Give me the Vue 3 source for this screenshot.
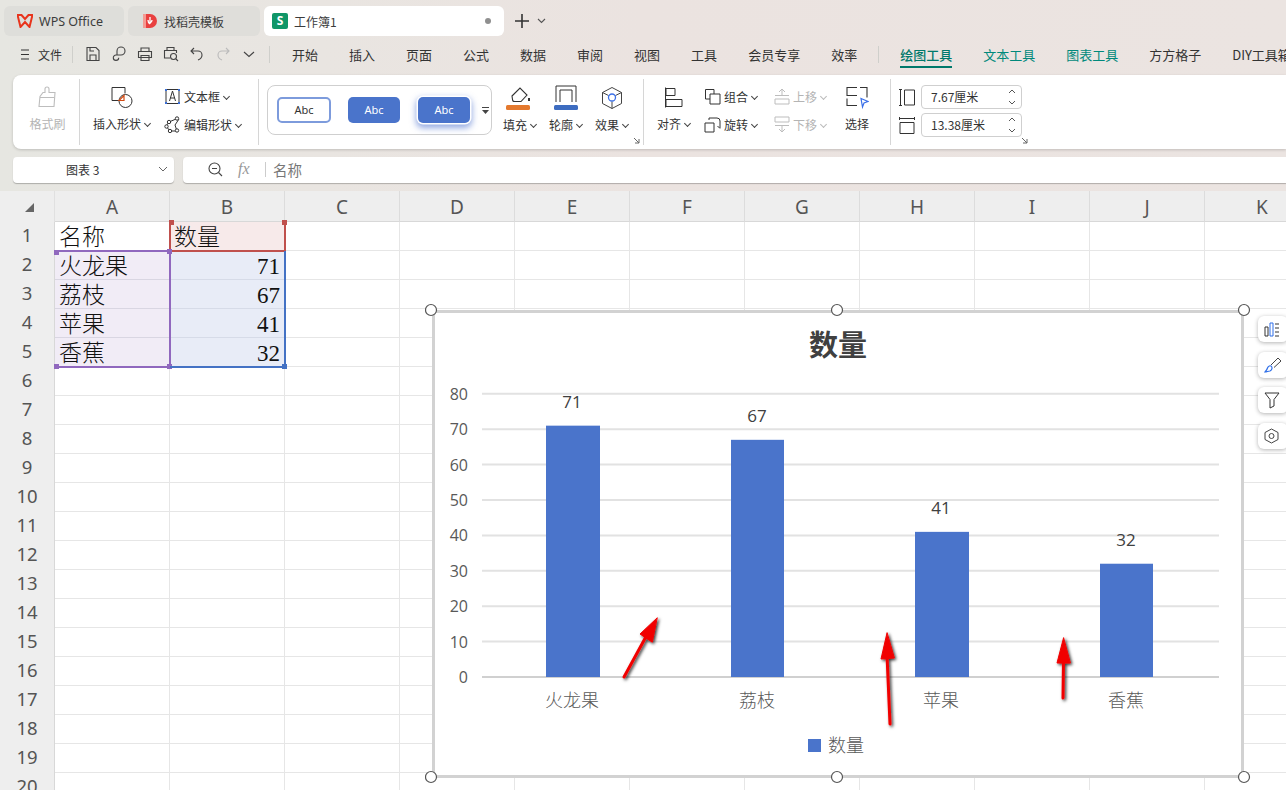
<script setup>
const menus = ['开始','插入','页面','公式','数据','审阅','视图','工具','会员专享','效率']
const tools = [
  { t:'绘图工具', c:'active' }, { t:'文本工具', c:'green' }, { t:'图表工具', c:'green' }, { t:'方方格子', c:'' }, { t:'DIY工具箱', c:'' }
]
const cols = ['A','B','C','D','E','F','G','H','I','J','K']
const rows = Array.from({ length: 20 }, (_, i) => i + 1)
const sheetData = {
  A1:'名称', B1:'数量',
  A2:'火龙果', B2:'71', A3:'荔枝', B3:'67', A4:'苹果', B4:'41', A5:'香蕉', B5:'32'
}
function cellClass(c, r) {
  const k = []
  if (c === 'B' && r > 1 && r < 6) k.push('num', 'tint-b')
  if (c === 'A' && r > 1 && r < 6) k.push('tint-a')
  if (c === 'B' && r === 1) k.push('tint-r')
  return k
}
const grid = [0,10,20,30,40,50,60,70,80]
const y = v => 677 - v * 3.54
const bars = [
  { n:'火龙果', v:71, x:546, w:54, cx:572 },
  { n:'荔枝', v:67, x:731, w:53, cx:757 },
  { n:'苹果', v:41, x:915, w:54, cx:941 },
  { n:'香蕉', v:32, x:1100, w:53, cx:1126 }
]
const handles = [[431,310],[837,310],[1244,310],[431,777],[837,777],[1244,777]]
</script>

<template>
  <div class="app">
    <div class="tabs">
      <div class="tab t1">
        <svg width="16" height="14" viewBox="0 0 16 14"><path d="M.5 1h4l3.500 4 3.500-4h4L12.500 13 8 8l-4.500 5z" fill="none" stroke="#e8341c" stroke-width="2"/></svg>
        <span>WPS Office</span>
      </div>
      <div class="tab t2">
        <svg width="15" height="16" viewBox="0 0 15 16"><path d="M1 1h7a7 7 0 0 1 0 14H1z" fill="#e9403f"/><path d="M1 1h3v14H1z" fill="#f49b93"/><path d="M8 4v7M8 11C6 10 6 8 6 7M8 10c2-1 2-2 2-3" stroke="#fff" stroke-width="1.3" fill="none"/></svg>
        <span>找稻壳模板</span>
      </div>
      <div class="tab t3">
        <div class="s-logo">S</div>
        <span>工作簿1</span>
        <i class="dot"></i>
      </div>
      <svg class="plus" width="16" height="16" viewBox="0 0 16 16"><path d="M8 1v14M1 8h14" stroke="#333" stroke-width="1.6"/></svg>
      <svg class="chev-s" width="9" height="6" viewBox="0 0 9 6"><path d="M1 1l3.5 3.5L8 1" fill="none" stroke="#555" stroke-width="1.1"/></svg>
    </div>

    <div class="menubar">
      <div class="file">
        <svg width="10" height="11" viewBox="0 0 10 11"><path d="M1 1h8M1 5.5h8M1 10h8" stroke="#333" stroke-width="1"/></svg>
        <span>文件</span>
      </div>
      <i class="vsep first"></i>
      <div class="quick">
        <svg width="16" height="16" viewBox="0 0 16 16" fill="none" stroke="#444" stroke-width="1.1"><path d="M2 1.500h9l3 3v10H2zM5 14.500V9h6v5.500M5 1.500V5h4"/></svg>
        <svg width="16" height="16" viewBox="0 0 16 16" fill="none" stroke="#444" stroke-width="1.1"><path d="M6 9V5a4 4 0 1 1 4 4H5a2.700 2.700 0 1 0 2.700 2.700"/></svg>
        <svg width="16" height="16" viewBox="0 0 16 16" fill="none" stroke="#444" stroke-width="1.1"><path d="M4 5V2h8v3M1.500 5.500h13v6h-13zM4 9.500h8v5H4z"/></svg>
        <svg width="16" height="16" viewBox="0 0 16 16" fill="none" stroke="#444" stroke-width="1.1"><path d="M4 4V1.500h7V4M7 12H1.500V4.500h12V7"/><circle cx="10.500" cy="10.500" r="3"/><path d="M13 13l2 2"/></svg>
        <svg width="16" height="16" viewBox="0 0 16 16" fill="none" stroke="#444" stroke-width="1.1"><path d="M5 2L2 5l3 3M2 5h7a4 4 0 0 1 4 4c0 2-1.500 4-4 5"/></svg>
        <svg width="16" height="16" viewBox="0 0 16 16" fill="none" stroke="#bbb" stroke-width="1.1"><path d="M11 2l3 3-3 3M14 5H7a4 4 0 0 0-4 4c0 2 1.500 4 4 5"/></svg>
        <svg width="16" height="16" viewBox="0 0 16 16" fill="none" stroke="#444" stroke-width="1.1"><path d="M3 6l5 4.500L13 6"/></svg>
      </div>
      <i class="vsep second"></i>
      <div class="menus">
        <span v-for="m in menus" :key="m">{{ m }}</span>
        <i class="vsep tool-sep"></i>
        <span v-for="t in tools" :key="t.t" :class="t.c">{{ t.t }}</span>
      </div>
    </div>

    <div class="ribbon">
      <div class="group g1">
        <div class="big muted">
          <svg width="24" height="24" viewBox="0 0 24 24" fill="none" stroke="#bdbdbd" stroke-width="1.100"><path d="M10 7V3.500a2 2 0 0 1 4 0V7h6l-1 14H4l1-10 3-4zM5 12h14"/></svg>
          <span>格式刷</span>
        </div>
      </div>
      <div class="group g2">
        <div class="big w58">
          <svg width="24" height="24" viewBox="0 0 24 24" fill="none"><path d="M10 15H2V2h13v6" stroke="#333" stroke-width="1"/><circle cx="15.500" cy="15.500" r="6.500" stroke="#333" stroke-width="1"/><path d="M9 15l5-5v5z" fill="#fff" stroke="#d24a12" stroke-width="1.200"/></svg>
          <span>插入形状<b class="caret"></b></span>
        </div>
        <div class="stack">
          <div class="row">
            <svg width="17" height="17" viewBox="0 0 17 17" fill="none"><path d="M2 3v11M15 3v11M3 1.500h11M3 15.500h11" stroke="#333"/><path d="M5.500 13l3-10 3 10M6.500 10h4" stroke="#333"/><path d="M1 1h2v2H1zM14 1h2v2h-2zM1 14h2v2H1zM14 14h2v2h-2z" fill="#3a6fd8"/></svg>
            <span>文本框<b class="caret"></b></span>
          </div>
          <div class="row">
            <svg width="17" height="17" viewBox="0 0 17 17" fill="none" stroke="#333"><path d="M12 3L5 6 2 10l4 5h7l-2-6 4-6"/><circle cx="13" cy="2.500" r="1.700" fill="#fff"/><circle cx="5" cy="6" r="1.700" fill="#fff"/><circle cx="2.500" cy="10.500" r="1.700" fill="#fff"/><circle cx="6" cy="15" r="1.700" fill="#fff"/><circle cx="13" cy="14.500" r="1.700" fill="#fff"/></svg>
            <span>编辑形状<b class="caret"></b></span>
          </div>
        </div>
      </div>
      <div class="group g3">
        <div class="gallery">
          <div class="abc a1">Abc</div>
          <div class="abc a2">Abc</div>
          <div class="abc a3">Abc</div>
          <svg class="gal-more" width="9" height="10" viewBox="0 0 9 10"><path d="M1 1.500h7" stroke="#444"/><path d="M1 4h7L4.500 8z" fill="#444"/></svg>
        </div>
        <div class="big w46 first-fill">
          <svg width="30" height="26" viewBox="0 0 30 26" fill="none"><path d="M7 11l8-8 7 7-6 6.500H9.500a2 2 0 0 1-2-2z" stroke="#333" stroke-width="1.100"/><path d="M24 13v3" stroke="#333" stroke-width="2"/><rect x="1" y="20" width="24" height="5" rx="1.500" fill="#e4792e"/></svg>
          <span>填充<b class="caret"></b></span>
        </div>
        <div class="big w46">
          <svg width="26" height="26" viewBox="0 0 26 26" fill="none"><path d="M3 17V1h20v16M7 17V5h12v12" stroke="#333" stroke-width="1"/><rect x="1" y="20" width="24" height="5" rx="1.500" fill="#3d6cc0"/></svg>
          <span>轮廓<b class="caret"></b></span>
        </div>
        <div class="big w46">
          <svg width="22" height="24" viewBox="0 0 22 24" fill="none"><path d="M11 1.500l9.500 5v11L11 22.500l-9.500-5v-11zM1.500 6.500l6 3M20.500 6.500l-6 3M11 15.500v7" stroke="#444"/><circle cx="11" cy="11.500" r="3.500" stroke="#3a6fe8" stroke-width="1.300"/></svg>
          <span>效果<b class="caret"></b></span>
        </div>
        <svg class="launch" width="7" height="7" viewBox="0 0 7 7"><path d="M1 1l5 5M6 2v4H2" fill="none" stroke="#666"/></svg>
      </div>
      <div class="group g4">
        <div class="big w56">
          <svg width="20" height="22" viewBox="0 0 20 22" fill="none" stroke="#333"><path d="M1.500 1v20M2 2h9v7H2zM2 13h16v7H2z"/></svg>
          <span>对齐<b class="caret"></b></span>
        </div>
        <div class="stack s-group">
          <div class="row">
            <svg width="17" height="17" viewBox="0 0 17 17" fill="none" stroke="#333"><path d="M10 6V1.500H1.500V11H6M6 6h10v10H6z"/></svg>
            <span>组合<b class="caret"></b></span>
          </div>
          <div class="row">
            <svg width="17" height="17" viewBox="0 0 17 17" fill="none" stroke="#333"><path d="M1 7h9v9H1zM5 4V2h8a3 3 0 0 1 3 3v7M13.500 10l2.500 2.500"/></svg>
            <span>旋转<b class="caret"></b></span>
          </div>
        </div>
        <div class="stack s-move muted">
          <div class="row">
            <svg width="16" height="17" viewBox="0 0 16 17" fill="none" stroke="#bdbdbd"><path d="M1 11h14v5H1zM1 7.500h14M8 7V1M5 4l3-3 3 3"/></svg>
            <span>上移<b class="caret"></b></span>
          </div>
          <div class="row">
            <svg width="16" height="17" viewBox="0 0 16 17" fill="none" stroke="#bdbdbd"><path d="M1 1h14v5H1zM1 9.500h14M8 10v6M5 13l3 3 3-3"/></svg>
            <span>下移<b class="caret"></b></span>
          </div>
        </div>
        <div class="big w42">
          <svg width="24" height="24" viewBox="0 0 24 24" fill="none"><path d="M12 2H2v8h10M15 2h7v10M2 13v7h10" stroke="#333" stroke-width="1.100"/><path d="M16 13l7 3-4 1.500-1.500 4z" fill="#fff" stroke="#3a6fe8" stroke-width="1.200"/></svg>
          <span>选择</span>
        </div>
      </div>
      <div class="group g5">
        <div class="stack">
          <div class="size-row">
            <svg width="16" height="17" viewBox="0 0 16 17" fill="none" stroke="#333"><path d="M0 .5h3M0 16.500h3M1.500 1v15M5.500 1h10v15h-10z"/></svg>
            <div class="spin">7.67厘米<span class="arrows"><svg width="8" height="5" viewBox="0 0 8 5"><path d="M1 4l3-3 3 3" fill="none" stroke="#555"/></svg><svg width="8" height="5" viewBox="0 0 8 5"><path d="M1 1l3 3 3-3" fill="none" stroke="#555"/></svg></span></div>
          </div>
          <div class="size-row">
            <svg width="16" height="17" viewBox="0 0 16 17" fill="none" stroke="#333"><path d="M.5 0v3M15.500 0v3M1 1.500h14M1 5.500h14v11H1z"/></svg>
            <div class="spin">13.38厘米<span class="arrows"><svg width="8" height="5" viewBox="0 0 8 5"><path d="M1 4l3-3 3 3" fill="none" stroke="#555"/></svg><svg width="8" height="5" viewBox="0 0 8 5"><path d="M1 1l3 3 3-3" fill="none" stroke="#555"/></svg></span></div>
          </div>
        </div>
        <svg class="launch l2" width="7" height="7" viewBox="0 0 7 7"><path d="M1 1l5 5M6 2v4H2" fill="none" stroke="#666"/></svg>
      </div>
    </div>

    <div class="formula">
      <div class="namebox">
        <span>图表 3</span>
        <svg width="10" height="6" viewBox="0 0 10 6"><path d="M1 1l4 4 4-4" fill="none" stroke="#666"/></svg>
      </div>
      <div class="fbar">
        <svg width="15" height="15" viewBox="0 0 15 15" fill="none" stroke="#444" stroke-width="1.100"><circle cx="6.500" cy="6.500" r="5.500"/><path d="M4 6.500h5M10.500 10.500l3.500 3.500"/></svg>
        <em>fx</em>
        <i class="fsep"></i>
        <span>名称</span>
      </div>
    </div>

    <div class="sheet">
      <div class="grid">
        <div class="corner"><i></i></div>
        <div v-for="c in cols" :key="c" class="colhead">{{ c }}</div>
        <template v-for="r in rows" :key="r">
          <div class="rowhead">{{ r }}</div>
          <div v-for="c in cols" :key="c + r" class="cell" :class="cellClass(c, r)">{{ sheetData[c + r] }}</div>
        </template>
      </div>

      <div class="sel sel-r"><i class="sq tl"></i><i class="sq tr"></i></div>
      <div class="sel sel-p"><i class="sq tl"></i><i class="sq bl"></i><i class="sq br"></i><i class="sq tr"></i></div>
      <div class="sel sel-b"><i class="sq br"></i></div>

      <svg class="chart" width="826" height="481" viewBox="425 303 826 481">
        <defs>
          <filter id="sh" x="-50%" y="-20%" width="200%" height="140%">
            <feDropShadow dx="1.500" dy="1.500" stdDeviation="1.500" flood-color="#000" flood-opacity="0.8"/>
          </filter>
        </defs>
        <rect x="433.500" y="311.500" width="809" height="465" fill="#fff" stroke="#d2d2d2" stroke-width="3"/>
        <text x="838" y="356" class="title" text-anchor="middle">数量</text>
        <g v-for="g in grid" :key="g">
          <line x1="482" x2="1219" :y1="y(g)" :y2="y(g)" :stroke="g === 0 ? '#d0d0d0' : '#e2e2e2'" stroke-width="2"/>
          <text x="468" :y="y(g) + 6" class="axis" text-anchor="end">{{ g }}</text>
        </g>
        <g v-for="b in bars" :key="b.n">
          <rect :x="b.x" :y="y(b.v)" :width="b.w" :height="b.v * 3.54" fill="#4a74cb"/>
          <text :x="b.cx" :y="y(b.v) - 18" class="val" text-anchor="middle">{{ b.v }}</text>
          <text :x="b.cx" y="707" class="cat" text-anchor="middle">{{ b.n }}</text>
        </g>
        <rect x="808" y="739" width="13" height="13" fill="#4a74cb"/>
        <text x="828" y="752" class="cat">数量</text>

        <g filter="url(#sh)" fill="#f10000" stroke="#f10000" stroke-linecap="round">
          <path d="M624 677L648 633" stroke-width="3" fill="none"/>
          <path d="M657 618L640 634L652 642Z" stroke-width="1"/>
          <path d="M890 724L887 655" stroke-width="3" fill="none"/>
          <path d="M887 633L881 659L894 658Z" stroke-width="1"/>
          <path d="M1063 698L1063.500 660" stroke-width="3" fill="none"/>
          <path d="M1063.500 638L1057 663L1070 663Z" stroke-width="1"/>
        </g>

        <circle v-for="(h, i) in handles" :key="i" :cx="h[0]" :cy="h[1]" r="5.500" fill="#fff" stroke="#555" stroke-width="1.200"/>
      </svg>

      <div class="side s1"><svg width="16" height="15" viewBox="0 0 16 15" fill="none"><path d="M1 5h3v9H1z" stroke="#333"/><path d="M6 1h3v13H6z" stroke="#2f6fe8"/><path d="M11 2h4M11 6h4M11 10h4M11 14h4" stroke="#333"/></svg></div>
      <div class="side s2"><svg width="18" height="16" viewBox="0 0 18 16" fill="none"><path d="M1 15c2 0 3-1 5-1 2-1 2.500-3 1.500-4.500S4 9 3.500 11 2 14 1 15z" stroke="#2f6fe8" stroke-width="1.200"/><path d="M7 8l7-7 3 3-7 6.500" stroke="#444"/></svg></div>
      <div class="side s3"><svg width="16" height="17" viewBox="0 0 16 17" fill="none" stroke="#333"><path d="M1 1h14L10 7.500V14l-4 2V7.500z"/></svg></div>
      <div class="side s4"><svg width="15" height="16" viewBox="0 0 15 16" fill="none" stroke="#444"><path d="M7.500 1l6.500 3.500v7L7.500 15 1 11.500v-7z"/><circle cx="7.500" cy="8" r="2.500"/></svg></div>
    </div>
  </div>
</template>

<style scoped>
.app {
  width: 1286px;
  height: 790px;
  overflow: hidden;
  position: relative;
  font-family: "Noto Sans CJK SC", "Noto Sans", sans-serif;
  color: #333;
  background: linear-gradient(90deg, #e6e6e1 0%, #e9e5e1 25%, #ebe3e0 50%, #ebe4e1 100%);
}
.tabs {
  height: 40px;
  box-sizing: border-box;
  padding: 6px 0 0 4px;
  display: flex;
  align-items: flex-start;
  gap: 4px;
}
.tab {
  height: 30px;
  border-radius: 6px;
  display: flex;
  align-items: center;
  font-size: 12px;
  color: #3c3c3c;
  box-sizing: border-box;
}
.t1 { width: 120px; background: #dededa; padding-left: 13px; gap: 6px; font-family: "Noto Sans", sans-serif; font-size: 12.500px; }
.t2 { width: 132px; background: #dfdeda; padding-left: 14px; gap: 7px; }
.t3 { width: 240px; background: #fff; padding-left: 8px; gap: 6px; position: relative; }
.s-logo {
  width: 16px; height: 16px; border-radius: 2px; background: #109668; color: #fff;
  font: 700 12px/16px "Noto Sans", sans-serif; text-align: center;
}
.dot { position: absolute; right: 13px; top: 12px; width: 6px; height: 6px; border-radius: 50%; background: #8f8f8f; }
.plus { margin: 7px 0 0 6px; }
.chev-s { margin: 12px 0 0 3px; }
.menubar {
  height: 35px;
  display: flex;
  align-items: center;
  position: relative;
  font-size: 13px;
  padding-bottom: 7px;
  box-sizing: border-box;
}
.file { display: flex; align-items: center; gap: 8px; margin-left: 20px; font-size: 12px; width: 42px; flex: none; white-space: nowrap; }
.vsep { display: block; width: 1px; height: 17px; background: #cfcfcb; flex: none; }
.vsep.first { margin-left: 10px; }
.quick { display: flex; align-items: center; gap: 10px; margin-left: 12px; width: 180px; flex: none; }
.vsep.second { margin-left: 4px; }
.menus { display: flex; align-items: center; gap: 31px; margin-left: 22px; white-space: nowrap; flex: none; }
.vsep.tool-sep { margin: 0 -10px; height: 17px; }
.menus .active { color: #00796b; position: relative; font-weight: 500; }
.menus .active::after { content: ""; position: absolute; left: 0; right: 0; bottom: -4px; height: 2px; background: #00796b; }
.menus .green { color: #00897b; }
.ribbon {
  height: 74px;
  margin-left: 13px;
  background: #fff;
  border-radius: 8px 0 0 8px;
  box-shadow: 0 1px 3px rgba(0,0,0,.18);
  display: flex;
  align-items: flex-start;
  padding-top: 4px;
  box-sizing: border-box;
  font-size: 12px;
}
.group {
  height: 66px;
  border-right: 1px solid #d6d6d6;
  display: flex;
  align-items: flex-start;
  box-sizing: border-box;
  position: relative;
  flex: none;
}
.g1 { width: 67px; padding-left: 3px; justify-content: center; }
.g2 { width: 179px; padding-left: 13px; gap: 13px; }
.g3 { width: 385px; padding: 6px 0 0 8px; }
.g4 { width: 247px; padding-left: 2px; }
.g5 { width: 200px; padding-left: 8px; border-right: 0; }
.big { display: flex; flex-direction: column; align-items: center; white-space: nowrap; margin-top: 1px; }
.big > svg { height: 35px; flex: none; }
.big > span { line-height: 18px; height: 18px; display: block; }
.g3 .big { margin-top: -5px; }
.g3 .big > svg { height: 36px; }
.w58 { width: 58px; }
.w46 { width: 46px; }
.w56 { width: 56px; }
.w42 { width: 42px; margin-left: 9px; }
.first-fill { margin-left: 5px; }
.muted { color: #b4b4b4; }
.caret {
  display: inline-block; width: 4px; height: 4px; margin: 0 1px 3px 4px;
  border-right: 1.200px solid #444; border-bottom: 1.200px solid #444; transform: rotate(45deg);
}
.muted .caret { border-color: #bbb; }
.stack { display: flex; flex-direction: column; margin-top: 3px; }
.row { height: 28px; display: flex; align-items: center; gap: 3px; white-space: nowrap; }
.s-group { margin-left: 2px; width: 70px; }
.gallery {
  width: 225px; height: 50px; box-sizing: border-box; border: 1px solid #cfcfcf; border-radius: 8px;
  display: flex; align-items: center; padding-left: 9px; position: relative; flex: none;
}
.abc {
  height: 26px; border-radius: 5px; font: 11px/26px "Noto Sans", sans-serif; text-align: center; box-sizing: border-box;
}
.a1 { width: 54px; border: 2px solid #7d9bdc; line-height: 22px; color: #333; background: #fff; }
.a2 { width: 52px; margin-left: 17px; background: #4a74cb; color: #fff; }
.a3 { width: 52px; margin-left: 18px; background: #4a74cb; color: #fff; box-shadow: 0 0 0 1.500px #fff, 0 3px 6px 2px rgba(60,100,200,.55); }
.gal-more { position: absolute; right: 1px; top: 20px; }
.launch { position: absolute; right: 3px; bottom: 1px; }
.launch.l2 { right: auto; left: 130px; bottom: 1px; }
.size-row { height: 28px; display: flex; align-items: center; gap: 6px; }
.g5 .stack { margin-top: 4px; }
.spin {
  width: 101px; height: 24px; box-sizing: border-box; border: 1px solid #cfcfcf; border-radius: 4px;
  padding-left: 9px; line-height: 22px; font-size: 12px; position: relative;
}
.arrows { position: absolute; right: 5px; top: 3px; display: flex; flex-direction: column; gap: 6px; }
.arrows svg { display: block; }
.formula { display: flex; margin: 8px 0 8px 13px; gap: 9px; height: 26px; }
.namebox {
  width: 161px; background: #fff; border-radius: 4px; box-shadow: 0 1px 1px rgba(0,0,0,.25);
  display: flex; align-items: center; justify-content: space-between; font-size: 12px;
  padding: 0 6px 2px 53px; box-sizing: border-box;
}
.fbar {
  flex: 1; background: #fff; border-radius: 4px 0 0 4px; box-shadow: 0 1px 1px rgba(0,0,0,.25);
  display: flex; align-items: center; padding: 0 0 2px 25px; font-size: 14.500px; color: #777;
}
.fbar em { font: italic 16px "Liberation Serif", serif; color: #999; margin-left: 15px; width: 27px; }
.fsep { width: 1px; height: 15px; background: #ccc; margin: 0 7px 0 0; }
.sheet { position: relative; height: 599px; width: 1286px; overflow: hidden; background: #fff; }
.grid {
  display: grid;
  grid-template-columns: 55px repeat(11, 115px);
  grid-template-rows: 31px;
  grid-auto-rows: 29px;
  width: 1320px;
}
.corner, .colhead, .rowhead {
  background: #eeeeee;
  color: #555;
  font: 19px/32px "Noto Sans", "Liberation Sans", sans-serif;
  text-align: center;
  box-sizing: border-box;
}
.corner { border-right: 1px solid #e0e0e0; position: relative; }
.corner i {
  position: absolute; right: 20px; top: 12px; width: 0; height: 0;
  border-left: 9px solid transparent; border-bottom: 9px solid #666;
}
.colhead { border-right: 1px solid #dcdcdc; border-bottom: 1px solid #d8d8d8; }
.rowhead { border-right: 1px solid #d8d8d8; line-height: 26px; font-size: 18.500px; }
.cell {
  border-right: 1px solid #e6e6e6;
  border-bottom: 1px solid #e6e6e6;
  box-sizing: border-box;
  font: 300 23px/32px "Liberation Serif", "Noto Sans CJK SC", serif;
  color: #111;
  padding: 0 4px;
  white-space: nowrap;
  overflow: hidden;
}
.num { text-align: right; font-size: 23px; }
.tint-a { background: #f1ecf6; border-color: #d9d6e2; }
.tint-b { background: #e8ecf7; border-color: #d6dbe8; }
.tint-r { background: #f7eaea; }
.sel { position: absolute; box-sizing: border-box; pointer-events: none; }
.sel-r { left: 169px; top: 31px; width: 117px; height: 30px; border: 2px solid #c0504d; border-top: 0; }
.sel-p { left: 55px; top: 59px; width: 116px; height: 118px; border: 2px solid #9068be; border-width: 2px 2px 2px 0; }
.sel-b { left: 170px; top: 60px; width: 116px; height: 117px; border: 2px solid #4472c4; border-width: 0 2px 2px 0; }
.sq { position: absolute; width: 5px; height: 5px; }
.sel-r .sq { background: #c0504d; }
.sel-p .sq { background: #9068be; }
.sel-b .sq { background: #4472c4; }
.sel-r .tl { left: -2px; top: -2px; }
.sel-r .tr { right: -3px; top: -2px; }
.sel-p .tl { left: -1px; top: -2px; }
.sel-p .bl { left: -1px; bottom: -3px; }
.sel-p .br { right: -3px; bottom: -3px; }
.sel-p .tr { right: -3px; top: -3px; }
.sel-b .br { right: -3px; bottom: -3px; }
.chart { position: absolute; left: 425px; top: 112px; }
.title { font: 700 29px "Noto Sans CJK SC", sans-serif; fill: #404040; }
.axis { font: 16px "Open Sans", sans-serif; fill: #595959; }
.val { font: 17px "Open Sans", sans-serif; fill: #404040; }
.cat { font: 300 18px "Noto Sans CJK SC", sans-serif; fill: #595959; }
.side {
  position: absolute; left: 1258px; width: 30px; height: 26px; background: #fff; border-radius: 6px;
  box-shadow: 0 1px 4px rgba(0,0,0,.3); display: flex; align-items: center; padding-left: 6px; box-sizing: border-box;
}
.s1 { top: 125px; }
.s2 { top: 161px; }
.s3 { top: 196px; }
.s4 { top: 232px; }
</style>
